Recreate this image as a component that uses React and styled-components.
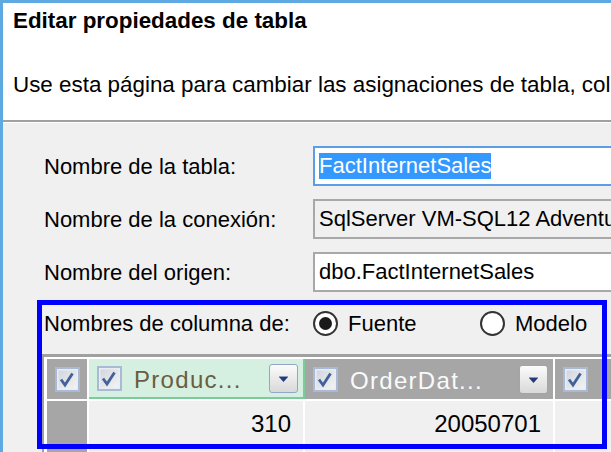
import React from 'react';
import styled, { createGlobalStyle } from 'styled-components';

const GlobalStyle = createGlobalStyle`
  html, body { margin: 0; padding: 0; background: #f0f0f0; }
  body { font-family: "Liberation Sans", Arial, sans-serif; overflow: hidden; }
  * { box-sizing: border-box; }
`;

const Window = styled.div`
  position: relative;
  width: 611px;
  height: 452px;
  overflow: hidden;
  border-left: 3px solid #5ea9e2;
  border-top: 3px solid #5ea9e2;
  background: #f0f0f0;
  display: flex;
  flex-direction: column;
  font-family: "Liberation Sans", Arial, sans-serif;
  color: #000;
`;

const Header = styled.header`
  flex: none;
  height: 119px;
  background: #fff;
  border-bottom: 2px solid #a0a0a0;
  padding: 5px 0 0 10px;
  white-space: nowrap;
`;

const Title = styled.h1`
  margin: 0;
  font-size: 22.4px;
  line-height: 26px;
  font-weight: 700;
`;

const Subtitle = styled.p`
  margin: 38px 0 0;
  font-size: 22.4px;
  line-height: 26px;
`;

const Body = styled.main`
  flex: 1;
  border-top: 1px solid #fff;
  padding: 23px 0 0 39px;
  display: flex;
  flex-direction: column;
`;

const FormRow = styled.div`
  flex: none;
  display: flex;
  align-items: center;
  height: 40px;
  margin-top: ${p => p.$gap ?? 13}px;
  &:first-child { margin-top: 0; }
`;

const Label = styled.div`
  flex: none;
  width: 271px;
  padding: 1px 0 0 2px;
  font-size: 22px;
  line-height: 26px;
  white-space: nowrap;
`;

const fieldColors = {
  focused: { border: '#5b9ee6', bg: '#fff' },
  readonly: { border: '#a8a8a8', bg: '#f0f0f0' },
  normal: { border: '#a8a8a8', bg: '#fff' },
};

const Field = styled.div`
  flex: 1;
  height: 40px;
  display: flex;
  align-items: center;
  padding: 0 4px;
  border: 2px solid ${p => fieldColors[p.$variant].border};
  border-right: none;
  background: ${p => fieldColors[p.$variant].bg};
  font-size: 22px;
  line-height: 26px;
  white-space: nowrap;
  overflow: hidden;
`;

const Selected = styled.span`
  background: #3399ff;
  color: #fff;
`;

const RadioOption = styled.label`
  flex: none;
  display: flex;
  align-items: center;
  width: ${p => (p.$width ? `${p.$width}px` : 'auto')};
  font-size: 22px;
  line-height: 26px;
`;

const RadioCircle = styled.span`
  flex: none;
  width: 25px;
  height: 25px;
  border-radius: 50%;
  border: 2px solid #333;
  background: #fff;
  display: flex;
  align-items: center;
  justify-content: center;
  &::after {
    content: '';
    display: ${p => (p.$checked ? 'block' : 'none')};
    width: 13px;
    height: 13px;
    border-radius: 50%;
    background: #1a1a1a;
  }
`;

const RadioText = styled.span`
  margin-left: 10px;
  padding-top: 1px;
`;

const Grid = styled.div`
  flex: none;
  margin-top: 11px;
  border-top: 3px solid #a0a0a0;
  border-left: 2px solid #a0a0a0;
  background: #fff;
  padding: 2px 0 0 3px;
  display: grid;
  grid-template-columns: 40px 214px 248px 1fr;
  grid-template-rows: 40px 52px;
  gap: 2px;
`;

const CornerCell = styled.div`
  background: #a6a6a6;
  display: flex;
  align-items: center;
  justify-content: center;
`;

const HeaderCell = styled.div`
  display: flex;
  align-items: center;
  padding-left: 8px;
  background: ${p => (p.$active ? '#d5efe0' : '#a6a6a6')};
  border-bottom: ${p => (p.$active ? '2px solid #7ccc9a' : 'none')};
  box-shadow: ${p => (p.$active ? '2px 0 0 #7ccc9a' : 'none')};
  min-width: 0;
`;

const HeaderText = styled.span`
  margin-left: 12px;
  padding-top: 3px;
  font-size: 24px;
  letter-spacing: 1.3px;
  color: ${p => (p.$active ? '#6b5d3e' : '#fafafa')};
  white-space: nowrap;
`;

const FilterButton = styled.span`
  flex: none;
  margin-left: auto;
  margin-right: 5px;
  width: 29px;
  height: 29px;
  border: 1px solid #93a6c8;
  border-radius: 3px;
  background: linear-gradient(#fbfbfb, #d9d9d9);
  display: flex;
  align-items: center;
  justify-content: center;
`;

const RowHeaderCell = styled.div`
  background: #a6a6a6;
`;

const DataCell = styled.div`
  background: #f0f0f0;
  display: flex;
  align-items: center;
  justify-content: flex-end;
  padding: 0 12px 6px 0;
  font-size: 24px;
  line-height: 28px;
`;

const Highlight = styled.div`
  position: absolute;
  left: 34px;
  top: 297px;
  width: 570px;
  height: 149px;
  border: 5px solid #0000ff;
  pointer-events: none;
`;

const CheckSvg = styled.svg`
  flex: none;
  display: block;
`;

const CheckBox = () => (
  <CheckSvg viewBox="0 0 25 25" width="25" height="25">
    <defs>
      <linearGradient id="cbfill" x1="0" y1="0" x2="1" y2="1">
        <stop offset="0" stopColor="#d2d6dd" />
        <stop offset="1" stopColor="#f3f3f3" />
      </linearGradient>
    </defs>
    <rect x="1" y="1" width="23" height="23" fill="#e9edf3" stroke="#a9bad7" strokeWidth="2" />
    <rect x="3.5" y="3.5" width="18" height="18" fill="url(#cbfill)" />
    <path d="M6 12.5 L10 18 L17.5 6.5" fill="none" stroke="#42619a" strokeWidth="2.8" />
  </CheckSvg>
);

const FilterIcon = () => (
  <svg viewBox="0 0 27 27" width="27" height="27">
    <path d="M9 11.5 H18" stroke="#8e9bb8" strokeWidth="1" />
    <path d="M9 12 H18 L13.5 17 Z" fill="#22397a" />
  </svg>
);

const Radio = ({ checked, label, width }) => (
  <RadioOption $width={width}>
    <RadioCircle $checked={checked} />
    <RadioText>{label}</RadioText>
  </RadioOption>
);

export default function App() {
  return (
    <>
      <GlobalStyle />
      <Window>
        <Header>
          <Title>Editar propiedades de tabla</Title>
          <Subtitle>Use esta página para cambiar las asignaciones de tabla, columnas y propiedades.</Subtitle>
        </Header>
        <Body>
          <FormRow>
            <Label>Nombre de la tabla:</Label>
            <Field $variant="focused">
              <Selected>FactInternetSales</Selected>
            </Field>
          </FormRow>
          <FormRow>
            <Label>Nombre de la conexión:</Label>
            <Field $variant="readonly">SqlServer VM-SQL12 AdventureWorksDW</Field>
          </FormRow>
          <FormRow>
            <Label>Nombre del origen:</Label>
            <Field $variant="normal">dbo.FactInternetSales</Field>
          </FormRow>
          <FormRow $gap={11}>
            <Label>Nombres de columna de:</Label>
            <Radio checked label="Fuente" width={167} />
            <Radio label="Modelo" />
          </FormRow>
          <Grid>
            <CornerCell>
              <CheckBox />
            </CornerCell>
            <HeaderCell $active>
              <CheckBox />
              <HeaderText $active>Produc...</HeaderText>
              <FilterButton>
                <FilterIcon />
              </FilterButton>
            </HeaderCell>
            <HeaderCell>
              <CheckBox />
              <HeaderText>OrderDat...</HeaderText>
              <FilterButton>
                <FilterIcon />
              </FilterButton>
            </HeaderCell>
            <HeaderCell>
              <CheckBox />
            </HeaderCell>
            <RowHeaderCell />
            <DataCell>310</DataCell>
            <DataCell>20050701</DataCell>
            <DataCell />
          </Grid>
        </Body>
        <Highlight />
      </Window>
    </>
  );
}
